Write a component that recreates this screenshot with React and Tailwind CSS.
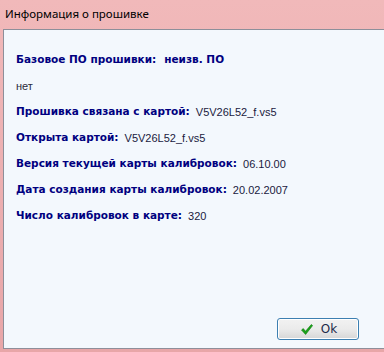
export default function App() {
  const rows = [
    { label: "Базовое ПО прошивки:", value: "неизв. ПО", boldValue: true },
    { plain: "нет" },
    { label: "Прошивка связана с картой:", value: "V5V26L52_f.vs5" },
    { label: "Открыта картой:", value: "V5V26L52_f.vs5" },
    { label: "Версия текущей карты калибровок:", value: "06.10.00" },
    { label: "Дата создания карты калибровок:", value: "20.02.2007" },
    { label: "Число калибровок в карте:", value: "320" },
  ];
  return (
    <div className="w-[384px] h-[352px] overflow-hidden bg-gradient-to-b from-[#f1b9ba] to-[#e8a6a8] flex flex-col">
      <div className="h-[29px] flex items-center pl-[5px] pb-[2px] text-[11.5px] text-black" style={{ fontFamily: '"Noto Sans", "Open Sans", sans-serif' }}>
        Информация о прошивке
      </div>
      <div className="ml-[3px] h-[320px] border border-[#8d8f9a] border-r-0 bg-[#f3f8fd] flex flex-col">
        <div className="flex flex-col pt-[17px] pl-[12px]">
          {rows.map((r, i) =>
            r.plain ? (
              <div key={i} className="h-[26px] flex items-center text-[11px] text-[#2a2a3a]" style={{ fontFamily: '"Liberation Sans", sans-serif' }}>
                {r.plain}
              </div>
            ) : (
              <div key={i} className="h-[26px] flex items-center">
                <span className="font-bold text-[#000080] text-[10.5px]" style={{ fontFamily: '"DejaVu Sans", sans-serif' }}>{r.label}</span>
                <span
                  className={r.boldValue ? "ml-[8px] font-bold text-[#000080] text-[10.5px]" : "ml-[6px] text-[#1a1a40] text-[11px]"}
                  style={{ fontFamily: r.boldValue ? '"DejaVu Sans", sans-serif' : '"Liberation Sans", sans-serif' }}
                >
                  {r.value}
                </span>
              </div>
            )
          )}
        </div>
        <div className="flex-1" />
        <div className="flex justify-end pr-[25px] pb-[8px]">
          <button className="w-[82px] h-[22px] rounded-[3px] border border-[#3c7fb1] bg-gradient-to-b from-[#f2f2f2] via-[#ebebeb] to-[#d6d6d6] flex items-center justify-center gap-[8px] pl-[2px] shadow-[inset_0_0_0_1px_#ffffff]">
            <svg width="12" height="11" viewBox="0 0 12 11">
              <path d="M0.5 6 L2.3 4.6 L4.5 7.3 L10.3 0.5 L11.6 1.6 L4.6 10.5 Z" fill="#1aa31a" stroke="#0b7a0b" strokeWidth="0.6" />
            </svg>
            <span className="text-[12px] text-[#1c2a4a]" style={{ fontFamily: '"DejaVu Sans", sans-serif' }}>Ok</span>
          </button>
        </div>
      </div>
    </div>
  );
}
